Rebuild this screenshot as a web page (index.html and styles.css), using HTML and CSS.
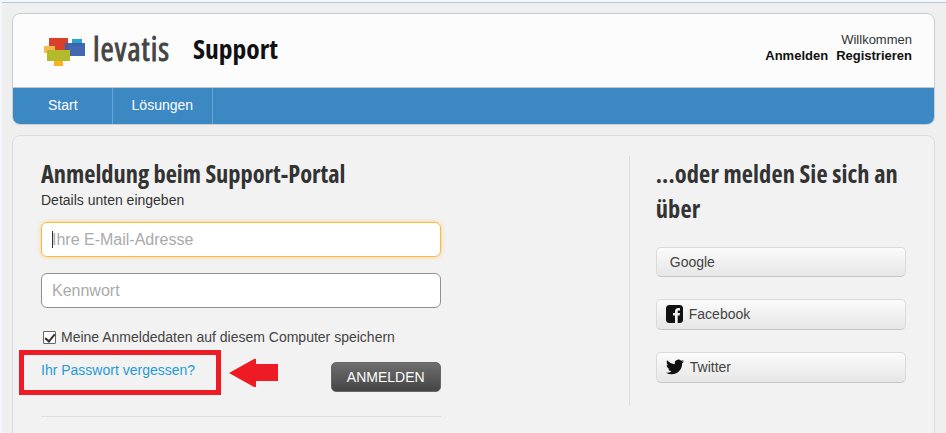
FILE: index.html
```html
<!DOCTYPE html>
<html lang="de">

<head>
    <meta charset="UTF-8">
    <meta name="viewport" content="width=device-width, initial-scale=1.0">
    <title>Anmeldung beim Support-Portal</title>
    <link rel="stylesheet" href="styles.css">
</head>

<body>
    <header class="site-header">
        <div class="brand-bar">
            <div class="brand">
                <svg class="logo-mark" width="42" height="28" viewBox="0 0 42 28">
                    <rect x="28" y="1" width="10" height="7" fill="#2aa3cf" />
                    <rect x="5" y="0" width="19" height="13" fill="#d8402b" />
                    <rect x="21" y="5" width="20" height="13" fill="#3a5fae" opacity="0.95" />
                    <rect x="0" y="8" width="11" height="7" fill="#f5b94e" />
                    <rect x="10" y="23" width="9" height="5" fill="#f7b321" />
                    <rect x="3" y="12" width="23" height="11" fill="#b3bb2b" />
                </svg>
                <span class="logo-text">levatis</span>
                <span class="site-title">Support</span>
            </div>
            <div class="user-links">
                <div>Willkommen</div>
                <div class="user-actions"><a href="#">Anmelden</a><a href="#">Registrieren</a></div>
            </div>
        </div>
        <nav class="main-nav">
            <a class="nav-item nav-first" href="#">Start</a>
            <a class="nav-item" href="#">Lösungen</a>
        </nav>
    </header>

    <main class="login-card">
        <section class="login-form">
            <h1 class="card-title">Anmeldung beim Support-Portal</h1>
            <p class="hint">Details unten eingeben</p>
            <div class="field-wrap">
                <input class="field field-active" type="text" placeholder="Ihre E-Mail-Adresse">
                <span class="caret"></span>
            </div>
            <input class="field" type="password" placeholder="Kennwort">
            <label class="remember">
                <input type="checkbox" checked>
                Meine Anmeldedaten auf diesem Computer speichern
            </label>
            <div class="form-actions">
                <a class="forgot" href="#">Ihr Passwort vergessen?</a>
                <button class="btn-login" type="button">ANMELDEN</button>
            </div>
            <div class="form-rule"></div>
        </section>

        <section class="social-login">
            <h2 class="card-title social-title">...oder melden Sie sich an über</h2>
            <button class="btn-social btn-google" type="button">Google</button>
            <button class="btn-social" type="button">
                <svg width="17" height="18" viewBox="0 0 17 18">
                    <rect x="0" y="0" width="17" height="18" rx="3.5" fill="#111" />
                    <path d="M9 18V10.500H7V8h2V6.300C9 4.300 10.200 3 12.200 3H14v2.500h-1.200c-.8 0-1.100.4-1.100 1.100V8H14l-.4 2.500h-1.900V18z" fill="#f2f2f2" />
                </svg>
                Facebook
            </button>
            <button class="btn-social" type="button">
                <svg width="18" height="18" viewBox="0 0 24 24">
                    <path d="M23.953 4.570a10 10 0 01-2.825.775 4.958 4.958 0 002.163-2.723c-.951.555-2.005.959-3.127 1.184a4.920 4.920 0 00-8.384 4.482C7.690 8.095 4.067 6.130 1.640 3.162a4.822 4.822 0 00-.666 2.475c0 1.710.870 3.213 2.188 4.096a4.904 4.904 0 01-2.228-.616v.060a4.923 4.923 0 003.946 4.827 4.996 4.996 0 01-2.212.085 4.936 4.936 0 004.604 3.417 9.867 9.867 0 01-6.102 2.105c-.390 0-.779-.023-1.170-.067a13.995 13.995 0 007.557 2.209c9.053 0 13.998-7.496 13.998-13.985 0-.210 0-.420-.015-.630A9.935 9.935 0 0024 4.590z" fill="#111" />
                </svg>
                Twitter
            </button>
        </section>
    </main>

    <!-- Markierung aus dem Screenshot -->
    <div class="mark-box"></div>
    <svg class="mark-arrow" width="50" height="28" viewBox="0 0 50 28">
        <path d="M0 14 L25 0 L27 0 L27 5 L49 5 L49 22 L27 22 L27 28 L25 28 Z" fill="#ed1c24" />
    </svg>
</body>

</html>
```

FILE: styles.css
```css
/* Grundlayout */
* {
    margin: 0;
    padding: 0;
    box-sizing: border-box;
    font-family: 'Liberation Sans', Arial, sans-serif;
}

html {
    height: 100%;
    overflow: hidden;
    background-color: #f3f7fb;
}

body {
    position: relative;
    height: 431px;
    margin: 2px 0 0 2px;
    overflow: hidden;
    background-color: #efefef;
    color: #333;
    font-size: 14px;
    border-top: 1px solid #b9c9da;
    padding: 10px 11px 0 10px;
}

a {
    text-decoration: none;
}

/* Kopfbereich */
.site-header {
    border: 1px solid #c9cdd1;
    border-radius: 8px;
    overflow: hidden;
    background-color: #fcfcfc;
}

.brand-bar {
    display: flex;
    justify-content: space-between;
    align-items: flex-start;
    height: 73px;
}

.brand {
    display: flex;
    align-items: center;
    height: 73px;
    padding-left: 31px;
}

.logo-mark {
    margin: 2px 7px 0 0;
}

.logo-text {
    width: 100px;
    margin-top: -4px;
    font-family: 'Open Sans', sans-serif;
    font-size: 32px;
    font-stretch: condensed;
    color: #444;
    letter-spacing: 1px;
    -webkit-text-stroke: 0.9px #444;
}

.site-title {
    margin-top: -5px;
    font-family: 'Open Sans', sans-serif;
    font-size: 27.5px;
    font-weight: 700;
    font-stretch: condensed;
    color: #111;
}

.user-links {
    padding: 18px 22px 0 0;
    text-align: right;
    font-size: 13px;
    line-height: 16px;
    color: #333;
}

.user-actions a {
    margin-left: 8px;
    font-weight: 700;
    color: #111;
}

.main-nav {
    display: flex;
    height: 37px;
    border-top: 1px solid #c4c7ca;
    background-color: #3b88c3;
}

.nav-item {
    padding: 0 19px;
    line-height: 35px;
    color: #fff;
    border-right: 1px solid #6aa3d0;
}

.nav-first {
    padding: 0 34px 0 35px;
}

/* Anmeldekarte */
.login-card {
    display: flex;
    height: 320px;
    margin-top: 10px;
    padding: 20px 28px 0;
    border: 1px solid #dcdcdc;
    border-radius: 8px;
    background-color: #f2f2f2;
}

.login-form {
    width: 401px;
}

.card-title {
    font-family: 'Open Sans', sans-serif;
    font-size: 24.4px;
    font-weight: 700;
    font-stretch: condensed;
    line-height: 35px;
    color: #333;
}

.hint {
    line-height: 18px;
    margin-bottom: 13px;
}

.field-wrap {
    position: relative;
}

.field {
    display: block;
    width: 100%;
    height: 35px;
    margin-bottom: 16px;
    padding: 0 10px;
    font-size: 16px;
    background-color: #fff;
    border: 1px solid #919191;
    border-radius: 6px;
    outline: none;
}

.field::placeholder {
    color: #aaa;
}

.field-active {
    border-color: #fbbb3f;
    box-shadow: 0 0 4px rgba(251, 187, 63, 0.6);
}

.caret {
    position: absolute;
    left: 11px;
    top: 9px;
    width: 1px;
    height: 17px;
    background-color: #333;
}

.remember {
    display: flex;
    align-items: center;
    line-height: 18px;
    margin-top: 20px;
    color: #444;
}

.remember input {
    position: relative;
    appearance: none;
    width: 13px;
    height: 13px;
    margin: 0 5px 0 2px;
    background-color: #fff;
    border: 1px solid #666;
    border-radius: 1px;
}

.remember input:checked::after {
    content: "";
    position: absolute;
    left: 3px;
    top: 0;
    width: 4px;
    height: 8px;
    border: solid #333;
    border-width: 0 2px 2px 0;
    transform: rotate(40deg);
}

.form-actions {
    display: flex;
    justify-content: space-between;
    align-items: flex-start;
    margin-top: 15px;
}

.forgot {
    color: #1f9ad6;
    line-height: 18px;
}

.btn-login {
    width: 110px;
    height: 30px;
    margin-top: 1px;
    font-size: 14px;
    color: #fff;
    background: linear-gradient(#6e6e6e, #454545);
    border: 1px solid #666;
    border-radius: 5px;
}

.form-rule {
    margin-top: 24px;
    border-top: 1px solid #ddd;
}

/* Soziale Anmeldung */
.social-login {
    width: 278px;
    height: 249px;
    margin-left: 188px;
    padding-left: 26px;
    border-left: 1px solid #ddd;
}

.social-title {
    margin-bottom: 21px;
    letter-spacing: 0.12px;
}

.btn-social {
    display: flex;
    align-items: center;
    gap: 6px;
    width: 250px;
    height: 31px;
    margin-bottom: 22px;
    padding: 0 0 1px 9px;
    font-size: 14px;
    color: #444;
    text-align: left;
    background: linear-gradient(#fbfbfb, #e6e6e6);
    border: 1px solid #dadada;
    border-bottom-color: #c6c6c6;
    border-radius: 5px;
}

.btn-google {
    height: 30px;
    padding: 0 0 0 13px;
}

/* Markierung */
.mark-box {
    position: absolute;
    left: 17px;
    top: 347px;
    width: 202px;
    height: 45px;
    border: 5px solid #ed1c24;
}

.mark-arrow {
    position: absolute;
    left: 227px;
    top: 356px;
}
```
